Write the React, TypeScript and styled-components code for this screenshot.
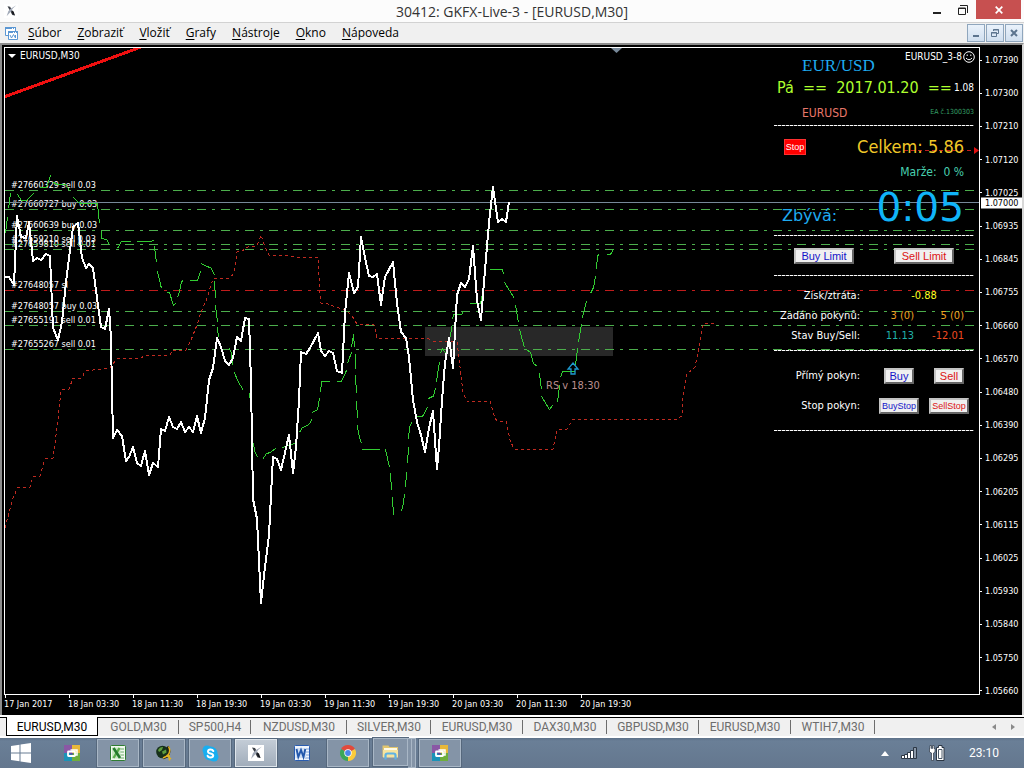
import React from "react";
import styled, { createGlobalStyle } from "styled-components";

const CHART_FONT = '"DejaVu Sans Condensed", "DejaVu Sans", sans-serif';
const WIDE_FONT = '"DejaVu Sans", sans-serif';
const UI_FONT = '"Open Sans", "Noto Sans", sans-serif';
const TAB_FONT = 'Roboto, "Noto Sans", sans-serif';

const GlobalStyle = createGlobalStyle`
  * { box-sizing: border-box; }
  body { margin: 0; background: #000; font-family: ${UI_FONT}; }
  button { font: inherit; padding: 0; cursor: pointer; }
  h1, h2, p, ul { margin: 0; padding: 0; font-weight: 400; list-style: none; }
`;

const Desktop = styled.div`
  display: flex;
  flex-direction: column;
  min-height: 100vh;
`;

/* ---------- title bar ---------- */

const TitleBar = styled.header`
  display: grid;
  grid-template-columns: 100px 1fr 100px;
  height: 23px;
  background: #fcfcfc;
  border-bottom: 1px solid #d2d2d2;
`;

const AppIcon = styled.div`
  padding: 4px 0 0 4px;
  svg { display: block; }
`;

const Title = styled.h1`
  font-size: 14px;
  line-height: 24px;
  text-align: center;
  color: #333;
  white-space: nowrap;
`;

const WindowButtons = styled.div`
  display: flex;
  justify-content: flex-end;
  padding-right: 3px;
`;

const WindowButton = styled.button<{ $close?: boolean }>`
  display: grid;
  place-items: center;
  width: ${(p) => (p.$close ? 45 : 26)}px;
  height: 19px;
  border: 0;
  background: ${(p) => (p.$close ? "#c75050" : "transparent")};
`;

/* ---------- menu ---------- */

const MenuBar = styled.nav`
  display: flex;
  align-items: center;
  height: 20px;
  padding-left: 4px;
  background: #f0f0f0;
`;

const MenuList = styled.ul`
  display: flex;
  flex: 1;
  gap: 16px;
  margin-left: 9px;
`;

const MenuItem = styled.button`
  display: block;
  border: 0;
  background: none;
  color: #000;
  font-family: ${UI_FONT};
  font-size: 12px;
  line-height: 18px;
  white-space: nowrap;
  u { text-underline-offset: 2px; }
`;

const MdiButtons = styled.div`
  display: flex;
  gap: 1px;
  padding-right: 1px;
`;

const MdiButton = styled.button`
  display: grid;
  place-items: center;
  width: 18px;
  height: 18px;
  border: 1px solid #8fa6bd;
  background: linear-gradient(#eaf2fb, #d0dfef);
`;

/* ---------- chart window ---------- */

const ChartFrame = styled.main`
  flex: 1;
  display: grid;
  grid-template-columns: 1fr 42px;
  grid-template-rows: 1fr 20px;
  padding: 2px 0 0 2px;
  min-height: 460px;
  background: #000;
  border: 2px solid #8c8c8c;
  border-right-color: #d8d8d8;
  border-bottom: 0;
  color: #fff;
  font-family: ${CHART_FONT};
`;

const Plot = styled.section`
  position: relative;
  border: 1px solid #fff;
  overflow: hidden;
`;

const ChartSvg = styled.svg`
  position: absolute;
  inset: 0;
  width: 100%;
  height: 100%;
`;

const VIEW = { x: 5, y: 48, w: 974, h: 646 };

const ChartLabel = styled.span<{ $x: number; $y: number; $size?: number; $color?: string }>`
  position: absolute;
  left: ${(p) => ((p.$x - VIEW.x) / VIEW.w) * 100}%;
  top: ${(p) => ((p.$y - VIEW.y) / VIEW.h) * 100}%;
  transform: translateY(-50%);
  font-size: ${(p) => p.$size ?? 9}px;
  line-height: 12px;
  color: ${(p) => p.$color ?? "#fff"};
  white-space: nowrap;
`;

const Zone = styled.div`
  position: absolute;
  left: ${((425 - VIEW.x) / VIEW.w) * 100}%;
  top: ${((327 - VIEW.y) / VIEW.h) * 100}%;
  width: ${(188 / VIEW.w) * 100}%;
  height: ${(29 / VIEW.h) * 100}%;
  background: #282828;
`;

const ChartTitle = styled.h2`
  position: absolute;
  top: 2px;
  left: 3px;
  display: flex;
  align-items: center;
  gap: 4px;
  font-size: 10px;
  line-height: 12px;
`;

const ExpertName = styled.div`
  position: absolute;
  top: 3px;
  right: 4px;
  display: flex;
  align-items: center;
  gap: 1px;
  font-size: 10px;
  line-height: 12px;
`;

const PriceAxis = styled.ul`
  position: relative;
  display: flex;
  flex-direction: column;
  justify-content: space-between;
  padding-top: 7px;
  margin-bottom: -2px;
`;

const PriceTick = styled.li`
  display: flex;
  align-items: center;
  gap: 3px;
  font-size: 9px;
  line-height: 12px;
  &::before { content: ""; width: 2px; height: 1px; background: #fff; }
`;

const CurrentPrice = styled.li`
  position: absolute;
  left: 1px;
  right: 0;
  top: 24%;
  transform: translateY(-50%);
  padding-left: 4px;
  background: #fff;
  color: #000;
  font-size: 9px;
  line-height: 11px;
`;

const TimeAxis = styled.ul`
  display: flex;
  overflow: hidden;
`;

const TimeTick = styled.li`
  flex: 0 0 64px;
  font-size: 9px;
  line-height: 12px;
  white-space: nowrap;
  &::before { content: ""; display: block; width: 1px; height: 3px; margin-left: 1px; background: #fff; }
`;

/* ---------- trading panel ---------- */

const Panel = styled.div`
  position: absolute;
  top: 8px;
  right: 5px;
  width: 200px;
  display: flex;
  flex-direction: column;
`;

const Divider = styled.hr`
  width: 100%;
  height: 1px;
  margin: 0;
  border: 0;
  background: repeating-linear-gradient(90deg, #fff 0 3px, #555 3px 4px);
`;

const PairName = styled.div`
  padding-left: 28px;
  color: #1eaaf0;
  font-family: "Liberation Serif", serif;
  font-size: 17px;
  line-height: 20px;
`;

const Spread = styled.div<{ $height: number; $indent: number }>`
  display: flex;
  align-items: center;
  justify-content: space-between;
  height: ${(p) => p.$height}px;
  padding-left: ${(p) => p.$indent}px;
`;

const PanelText = styled.span<{ $size: number; $color: string; $wide?: boolean }>`
  font-family: ${(p) => (p.$wide ? WIDE_FONT : CHART_FONT)};
  font-size: ${(p) => p.$size}px;
  line-height: 1;
  color: ${(p) => p.$color};
  white-space: pre;
`;

const TotalRow = styled.div`
  display: flex;
  align-items: center;
  justify-content: space-between;
  height: 34px;
  margin-top: 4px;
  padding: 0 10px;
`;

const StopButton = styled.button`
  width: 22px;
  height: 16px;
  border: 1px solid #ff3030;
  background: #f00;
  color: #fff;
  font-family: "Liberation Sans", sans-serif;
  font-size: 9px;
  line-height: 14px;
`;

const MarginRow = styled.div`
  padding-right: 10px;
  text-align: right;
  line-height: 14px;
  height: 14px;
`;

const CountdownRow = styled.div`
  display: flex;
  align-items: baseline;
  justify-content: space-between;
  height: 57px;
  padding: 10px 10px 0 8px;
`;

const LimitRow = styled.div`
  display: grid;
  grid-template-columns: 1fr 1fr;
  place-items: center;
  height: 39px;
`;

const TradeButton = styled.button<{ $side: "buy" | "sell"; $width: number; $small?: boolean }>`
  width: ${(p) => p.$width}px;
  height: 16px;
  border: 2px solid;
  border-color: #c4c4c4 #666 #666 #c4c4c4;
  background: #f0f0f0;
  color: ${(p) => (p.$side === "buy" ? "#1414c8" : "#dc1414")};
  font-family: "Liberation Sans", sans-serif;
  font-size: ${(p) => (p.$small ? 9 : 11)}px;
  line-height: 12px;
  white-space: nowrap;
`;

const Block = styled.div<{ $bottom: number }>`
  padding: 10px 0 ${(p) => p.$bottom}px;
`;

const Row = styled.div<{ $height: number }>`
  display: grid;
  grid-template-columns: 100px 50px 50px;
  align-items: center;
  height: ${(p) => p.$height}px;
  font-size: 11px;
  line-height: 14px;
  white-space: nowrap;
`;

const RowLabel = styled.span`
  padding-right: 14px;
  text-align: right;
`;

const Value = styled.span<{ $color: string; $span?: boolean }>`
  grid-column: ${(p) => (p.$span ? "2 / 4" : "auto")};
  padding-right: ${(p) => (p.$span ? 0 : 10)}px;
  text-align: ${(p) => (p.$span ? "center" : "right")};
  color: ${(p) => p.$color};
`;

const Cell = styled.span`
  display: grid;
  justify-items: center;
`;

/* ---------- chart tabs ---------- */

const TabBar = styled.nav`
  display: flex;
  height: 23px;
  padding-left: 6px;
  background: #f0f0f0;
  border-top: 2px solid #fff;
  border-bottom: 2px solid #fff;
  box-shadow: inset 0 1px 0 #000;
`;

const Tab = styled.button<{ $active?: boolean; $width: number }>`
  position: relative;
  width: ${(p) => p.$width}px;
  height: 19px;
  border: ${(p) => (p.$active ? "1px solid #000" : "0")};
  border-top: 0;
  background: ${(p) => (p.$active ? "#fff" : "none")};
  color: ${(p) => (p.$active ? "#000" : "#6d6d6d")};
  font-family: ${TAB_FONT};
  font-size: 12px;
  line-height: 20px;
  &::after {
    content: "";
    position: absolute;
    right: 0;
    top: 3px;
    width: ${(p) => (p.$active ? 0 : 1)}px;
    height: 14px;
    background: #6d6d6d;
  }
`;

const TabScroll = styled.div`
  display: flex;
  gap: 11px;
  margin-left: auto;
  padding-right: 7px;
`;

const ScrollButton = styled.button`
  display: grid;
  place-items: center;
  width: 8px;
  border: 0;
  background: none;
`;

/* ---------- taskbar ---------- */

const TaskBar = styled.footer`
  display: flex;
  align-items: center;
  height: 30px;
  background: linear-gradient(#5d7188, #6a7f97 3px, #64778e);
`;

const StartButton = styled.button`
  display: grid;
  place-items: center;
  width: 41px;
  margin-right: 10px;
  border: 0;
  background: none;
`;

const TaskButton = styled.button<{ $state: "idle" | "open" | "active" }>`
  display: grid;
  place-items: center;
  width: 42px;
  height: 28px;
  margin-right: 4px;
  border: 1px solid ${(p) => ({ idle: "transparent", open: "#a9b7c6", active: "#dfe6ec" })[p.$state]};
  background: ${(p) => ({ idle: "transparent", open: "#8494a7", active: "linear-gradient(#c3ccd6, #a1adbb)" })[p.$state]};
  box-shadow: 0 0 0 1px ${(p) => (p.$state === "idle" ? "transparent" : "#56687d")};
`;

const TaskStack = styled.div`
  display: flex;
  width: 46px;
  ${TaskButton} { width: 35px; margin-right: 0; }
  &::after {
    content: "";
    width: 7px;
    height: 28px;
    border: 1px solid #a9b7c6;
    border-left: 0;
    background: linear-gradient(90deg, #8494a7 3px, #a9b7c6 3px 4px, #8494a7 4px);
  }
`;

const Tray = styled.div`
  display: flex;
  align-items: center;
  margin-left: auto;
  padding-right: 25px;
`;

const TrayIcons = styled.div`
  display: flex;
  align-items: center;
  gap: 12px;
  margin-right: 24px;
`;

const Clock = styled.time`
  color: #fff;
  font-family: ${TAB_FONT};
  font-size: 12px;
`;

/* ---------- data ---------- */

const menus = ["Súbor", "Zobraziť", "Vložiť", "Grafy", "Nástroje", "Okno", "Nápoveda"];

const prices = [
  "1.07390", "1.07300", "1.07210", "1.07120", "1.07025", "1.06935", "1.06845", "1.06755", "1.06660", "1.06570",
  "1.06480", "1.06390", "1.06295", "1.06205", "1.06115", "1.06025", "1.05930", "1.05840", "1.05750", "1.05660",
];

const times = [
  "17 Jan 2017", "18 Jan 03:30", "18 Jan 11:30", "18 Jan 19:30", "19 Jan 03:30",
  "19 Jan 11:30", "19 Jan 19:30", "20 Jan 03:30", "20 Jan 11:30", "20 Jan 19:30",
];

const orders = [
  { line: 190, text: "#27660329 sell 0.03" },
  { line: 209, text: "#27660727 buy 0.03" },
  { line: 230, text: "#27660639 buy 0.03" },
  { line: 244, text: "#27659210 sell 0.03" },
  { line: 249, text: "#27659810 sell 0.01" },
  { line: 290, text: "#27648057 sl", stop: true },
  { line: 311, text: "#27648057 buy 0.03" },
  { line: 325, text: "#27655191 sell 0.01" },
  { line: 349, text: "#27655267 sell 0.01" },
];

const tabs = [
  { name: "EURUSD,M30", width: 92 },
  { name: "GOLD,M30", width: 81 },
  { name: "SP500,H4", width: 72 },
  { name: "NZDUSD,M30", width: 96 },
  { name: "SILVER,M30", width: 84 },
  { name: "EURUSD,M30", width: 92 },
  { name: "DAX30,M30", width: 84 },
  { name: "GBPUSD,M30", width: 92 },
  { name: "EURUSD,M30", width: 92 },
  { name: "WTIH7,M30", width: 84 },
];

const priceLine =
  "5,277 9,277 14,285 17,216 21,237 26,238 29,222 33,261 37,258 41,260 46,254 50,256 53,328 58,340 62,322 66,282 69,258 73,227 78,223 82,258 86,268 89,264 93,268 97,298 101,327 105,329 109,309 110,322 111,340 113,438 117,430 122,436 126,461 129,457 133,447 137,463 141,466 145,451 149,475 153,463 158,467 161,429 165,431 169,417 173,427 177,429 181,422 185,432 189,427 193,432 197,416 201,433 205,418 209,380 213,368 217,338 221,347 225,361 229,365 233,358 237,337 241,341 245,318 249,319 251,383 253,499 257,519 261,603 265,567 269,535 271,495 273,457 277,459 281,470 289,435 293,473 296,447 299,400 301,352 306,354 310,348 318,333 321,351 325,356 329,351 333,353 337,371 342,373 345,313 349,273 354,293 358,287 361,237 365,258 369,276 373,277 377,274 381,305 385,277 393,262 397,303 401,332 406,338 409,357 413,400 417,422 421,435 425,452 429,428 433,411 437,469 439,447 442,400 445,363 449,338 453,368 457,295 461,283 465,287 469,279 473,246 477,300 481,320 485,270 489,223 493,187 498,222 502,219 506,222 509,202";

const greenSegments = [
  "5,233 7,217", "8,208 10,193", "17,194 21,200 26,200 33,193", "39,187 46,187 50,175", "53,182 57,184 65,184 69,190",
  "73,197 78,202 82,203 97,203", "97,204 99,223", "101,230 101,238 106,239 109,244", "117,248 121,241 130,241",
  "136,241 151,241 154,239", "154,246 156,262", "157,271 161,288", "166,292 169,292 173,305 175,303",
  "177,297 179,291 181,281 183,280", "189,280 197,280 200,271", "201,263 206,266 210,267 213,272 214,275",
  "214,281 215,298", "215,305 217,322", "217,327 218,337", "229,348 231,353 232,365", "234,372 237,380 243,390",
  "249,393 250,401", "253,443 254,450 257,457", "262,459 266,453 270,452 276,447", "282,447 290,444 295,443",
  "299,432 302,427 309,424 311,419", "312,412 317,409 319,398", "320,392 321,381 329,381", "336,381 341,381 346,370",
  "347,363 351,352", "351,347 353,334 354,347", "355,353 355,368", "355,375 356,393", "356,401 357,418",
  "357,425 358,433 361,443", "361,449 379,449", "385,449 389,467", "390,473 391,490", "392,497 393,515",
  "400,511 402,508 404,494", "405,487 406,472", "407,463 408,447", "408,439 409,427 411,422", "414,416 422,416 427,407",
  "428,399 429,397 433,396 435,388", "436,382 437,373 439,362", "440,353 442,348 446,354", "447,348 449,343",
  "450,337 451,326", "452,319 453,314 461,314 463,311", "469,303 480,303 482,293", "483,290 484,281",
  "489,269 502,269 503,274", "504,282 514,298", "515,305 518,322", "519,329 524,347", "526,349 530,352 533,363 537,366",
  "539,373 541,389", "541,396 549,409 552,405", "557,402 559,385", "560,377 562,371 574,371", "575,365 577,348",
  "578,342 581,324", "582,318 583,312 586,301", "590,293 593,287 595,276", "596,269 597,255 599,254", "606,254 610,254 613,249",
];

const redCurve =
  "5,528 9,513 13,498 18,487 30,487 33,477 40,476 45,459 53,458 58,420 61,390 69,389 73,378 82,378 85,371 110,368 115,361 118,358 140,358 145,356 170,355 173,350 186,350 191,340 197,325 201,312 206,301 213,279 230,278 234,273 237,252 242,251 248,247 257,246 261,235 265,247 269,255 290,256 295,257 318,257 320,293 321,303 328,304 335,307 346,310 352,316 357,324 374,325 377,338 427,338 433,341 457,342 460,367 463,393 467,401 490,401 495,418 497,421 506,421 510,440 514,449 553,449 557,430 567,429 573,419 677,419 682,416 683,397 687,374 695,367 698,353 702,328 705,323 717,323";

/* ---------- icons ---------- */

const TerminalIcon = ({ size }: { size: number }) => (
  <svg width={size} height={size} viewBox="0 0 16 16" aria-hidden="true">
    <rect width="16" height="16" fill="#fff" />
    <path d="M4 2.500 7 3l5.500 10-3-.5z" fill="#3c4048" />
    <path d="M14 1.500 10 5 8.500 8 3 14l2-6 3-3z" fill="#a3abb9" />
    <path d="M9 7.500l2 1 1.500 4.500-3-2z" fill="#15171c" />
  </svg>
);

const ChartsIcon = () => (
  <svg width="15" height="15" viewBox="0 0 15 15" fill="#fff" stroke="#5b97d3" aria-hidden="true">
    <path d="M1.500 1.500h10v8h-10z" />
    <path d="M1 2h11" strokeWidth="2" strokeDasharray="7 1 1 1" />
    <path d="M4.500 5.500h9v8h-9z" />
    <path d="M4 6h10" strokeWidth="2" strokeDasharray="5 1 1 1" />
    <path d="M6 9l1.500 3 2-3.500 2 3.500V9" fill="none" />
  </svg>
);

const ColorSquareIcon = () => (
  <svg width="16" height="16" viewBox="0 0 16 16" aria-hidden="true">
    <path d="M0 0h8v8H0z" fill="#8a57a5" />
    <path d="M8 0h8v8H8z" fill="#e8b83a" />
    <path d="M0 8h8v8H0z" fill="#1b93b8" />
    <path d="M8 8h8v8H8z" fill="#6fae3c" />
    <rect x="4" y="6.500" width="7" height="4.500" rx=".5" fill="none" stroke="#fff" strokeWidth="1.800" />
    <path d="M6.500 5H13v5h-2" fill="none" stroke="#fff" strokeWidth="1.500" />
    <path d="M6 8h3v1.500H6z" fill="#5d4c9c" />
  </svg>
);

const ExcelIcon = () => (
  <svg width="16" height="16" viewBox="0 0 16 16" aria-hidden="true">
    <rect x=".5" y=".5" width="15" height="15" rx="1" fill="#f2f9ef" stroke="#2f7d32" />
    <path d="M10 4h4M10 7h4M10 10h4M10 13h4" stroke="#6aa86a" />
    <path d="M2 2.500h8.500v11H2z" fill="#c9e6c2" />
    <path d="M9.500 3l-6 10" stroke="#5cae4c" strokeWidth="2.400" />
    <path d="M3.500 3l6.500 10" stroke="#237a2b" strokeWidth="2.600" />
  </svg>
);

const GlobeIcon = () => (
  <svg width="16" height="16" viewBox="0 0 16 16" aria-hidden="true">
    <circle cx="6.500" cy="7" r="6.300" fill="#16301a" />
    <path d="M2 5q2-3.500 5-3l-1 3-3 2zM6 6.500l4-2 .5 3-3.500 2z" fill="#5d9c3e" />
    <path d="M11.500 1.500q3.500 5-.5 10l-4 1.500" fill="none" stroke="#1b1b12" strokeWidth="2.600" />
    <path d="M12.500 1.500q3 5.500-1.500 9.500l-4 2M10.500 10l4.500 4M13 10l.5 5.500" fill="none" stroke="#e2b321" strokeWidth="1.500" />
  </svg>
);

const SkypeIcon = () => (
  <svg width="17" height="17" viewBox="0 0 17 17" aria-hidden="true">
    <circle cx="8.500" cy="8.500" r="7" fill="#18aef0" />
    <circle cx="5" cy="5" r="4.500" fill="#18aef0" />
    <circle cx="12" cy="12" r="4.500" fill="#18aef0" />
    <path
      d="M11.300 6Q10.500 4.400 8.300 4.500T6 6.400Q6 8 8.500 8.400T11.200 10.600Q11 12.500 8.500 12.500T5.600 10.800"
      fill="none"
      stroke="#fff"
      strokeWidth="2"
      strokeLinecap="round"
    />
  </svg>
);

const WordIcon = () => (
  <svg width="16" height="16" viewBox="0 0 16 16" aria-hidden="true">
    <rect x=".5" y=".5" width="15" height="15" rx="1" fill="#f0f5fc" stroke="#2a5db0" />
    <path d="M11 4h4M11 7h4M11 10h4M11 13h4" stroke="#7fa3d9" />
    <path d="M1.500 3h10.500v10H1.500z" fill="#cfdff5" />
    <path d="M2.500 4l1.800 8L7 5l2.500 7 1.800-8" fill="none" stroke="#2358ac" strokeWidth="1.900" />
  </svg>
);

const ChromeIcon = () => (
  <svg width="16" height="16" viewBox="0 0 16 16" aria-hidden="true">
    <path d="M8 8 1.070 4A8 8 0 0 1 14.930 4z" fill="#e24a3b" />
    <path d="M8 8 14.930 4A8 8 0 0 1 8 16z" fill="#fbcb3c" />
    <path d="M8 8v8A8 8 0 0 1 1.070 4z" fill="#3aa757" />
    <circle cx="8" cy="8" r="3.700" fill="#fff" />
    <circle cx="8" cy="8" r="2.900" fill="#4a86e8" />
  </svg>
);

const FolderIcon = () => (
  <svg width="17" height="16" viewBox="0 0 17 16" aria-hidden="true">
    <path d="M.5 1.500h6l1 1.500h8.500v10H.5z" fill="#e2c66e" />
    <path d="M2 4h13v2H2z" fill="#fffbe6" />
    <path d="M1 6h15v7.500H1z" fill="#f5e4a0" />
    <path d="M3.500 15.500v-4q0-2 2-2h6q2 0 2 2v4" fill="none" stroke="#5eb3e4" strokeWidth="2.200" />
  </svg>
);

const WindowsIcon = () => (
  <svg width="20" height="20" viewBox="0 0 20 20" fill="#fff" aria-hidden="true">
    <path d="M0 3l8.500-1.200V9.500H0zM9.500 1.600 20 0v9.500H9.500zM0 10.500h8.500v7.700L0 17zM9.500 10.500H20V20L9.500 18.400z" />
  </svg>
);

const SignalIcon = () => (
  <svg width="16" height="12" viewBox="0 0 16 12" stroke="#2c3745" fill="#fff" aria-hidden="true">
    <path d="M.5 8.500h3v3h-3zM3.500 7.500h3v4h-3zM6.500 5.500h3v6h-3zM9.500 3.500h3v8h-3z" />
    <path d="M12.500.5h3v11h-3z" fill="#8b98a8" />
  </svg>
);

const BatteryIcon = () => (
  <svg width="16" height="16" viewBox="0 0 16 16" aria-hidden="true">
    <path d="M1 .5h1.500v3h1V.5H5v3h1v3.500L4.500 8v7.500h-2V8L.5 7V3.500H1z" fill="#fff" stroke="#2c3745" strokeWidth=".7" />
    <path d="M7.500 2.500h2v-2h3.500v2h2v13H7.500z" fill="#fff" stroke="#2c3745" />
    <path d="M9.500 4.500h3.500v9H9.500z" fill="#fff" stroke="#4a5868" />
  </svg>
);

const tasks: { label: string; state: "idle" | "open" | "active"; icon: React.ReactNode; stack?: boolean }[] = [
  { label: "Aplikácia", state: "idle", icon: <ColorSquareIcon /> },
  { label: "Excel", state: "open", icon: <ExcelIcon /> },
  { label: "Glóbus", state: "open", icon: <GlobeIcon /> },
  { label: "Skype", state: "open", icon: <SkypeIcon /> },
  { label: "Terminál", state: "active", icon: <TerminalIcon size={16} /> },
  { label: "Word", state: "idle", icon: <WordIcon /> },
  { label: "Chrome", state: "open", icon: <ChromeIcon /> },
  { label: "Prieskumník", state: "open", icon: <FolderIcon />, stack: true },
  { label: "Aplikácia 2", state: "open", icon: <ColorSquareIcon /> },
];

/* ---------- sections ---------- */

const ChartDrawing = () => (
  <ChartSvg viewBox={`${VIEW.x} ${VIEW.y} ${VIEW.w} ${VIEW.h}`} preserveAspectRatio="none" fill="none" aria-hidden="true">
    <g shapeRendering="crispEdges">
      {orders.map((o) => (
        <line
          key={o.line}
          x1="5"
          x2="974"
          y1={o.line + 0.5}
          y2={o.line + 0.5}
          stroke={o.stop ? "#c01c1c" : "#4cae4c"}
          strokeDasharray="9 6 3 6"
        />
      ))}
      <line x1="5" x2="979" y1="202.500" y2="202.500" stroke="#778899" />
      <polyline points={redCurve} stroke="#c02a20" strokeDasharray="3 3" />
      {greenSegments.map((s) => (
        <polyline key={s} points={s} stroke="#32cd32" transform="translate(.5 .5)" />
      ))}
      <line x1="4" y1="97" x2="141" y2="47" stroke="#f01010" strokeWidth="3" />
      <polyline points={priceLine} stroke="#fff" strokeWidth="2" strokeLinejoin="round" />
    </g>
    <path d="M573 363l5 6h-3v5h-4v-5h-3z" stroke="#1e9ad0" strokeWidth="1.300" />
    <path d="M611 48h11l-5.500 5z" fill="#778899" />
    <line x1="904" x2="975" y1="150.500" y2="150.500" stroke="#c01c1c" strokeDasharray="4 3" />
    <path d="M974 147l5 3.500-5 3.500z" fill="#e01010" />
  </ChartSvg>
);

const TradingPanel = () => (
  <Panel>
    <PairName>EUR/USD</PairName>
    <Spread $height={24} $indent={3}>
      <PanelText $size={16} $color="#adff2f">{"Pá  ==  2017.01.20  =="}</PanelText>
      <PanelText $size={10} $color="#fff">1.08</PanelText>
    </Spread>
    <Spread $height={25} $indent={28}>
      <PanelText $size={12} $color="#e9776a">EURUSD</PanelText>
      <PanelText $size={7} $color="#36a068">EA č.1300303</PanelText>
    </Spread>
    <Divider />
    <TotalRow>
      <StopButton>Stop</StopButton>
      <PanelText $size={18} $color="#f0c828">Celkem: 5.86</PanelText>
    </TotalRow>
    <MarginRow>
      <PanelText $size={12} $color="#48d1b0">{"Marže:  0 %"}</PanelText>
    </MarginRow>
    <CountdownRow>
      <PanelText $size={16} $color="#1eaaf0" $wide>Zbývá:</PanelText>
      <PanelText $size={39} $color="#10b4f8" $wide>0:05</PanelText>
    </CountdownRow>
    <Divider />
    <LimitRow>
      <TradeButton $side="buy" $width={60}>Buy Limit</TradeButton>
      <TradeButton $side="sell" $width={60}>Sell Limit</TradeButton>
    </LimitRow>
    <Divider />
    <Block $bottom={4}>
      <Row $height={20}>
        <RowLabel>Zisk/ztráta:</RowLabel>
        <Value $color="#ffff20" $span>-0.88</Value>
      </Row>
      <Row $height={20}>
        <RowLabel>Zadáno pokynů:</RowLabel>
        <Value $color="#f0a020">3 (0)</Value>
        <Value $color="#f0a020">5 (0)</Value>
      </Row>
      <Row $height={20}>
        <RowLabel>Stav Buy/Sell:</RowLabel>
        <Value $color="#20b2aa">11.13</Value>
        <Value $color="#f04a20">-12.01</Value>
      </Row>
    </Block>
    <Divider />
    <Block $bottom={9}>
      <Row $height={30}>
        <RowLabel>Přímý pokyn:</RowLabel>
        <Cell><TradeButton $side="buy" $width={30}>Buy</TradeButton></Cell>
        <Cell><TradeButton $side="sell" $width={30}>Sell</TradeButton></Cell>
      </Row>
      <Row $height={30}>
        <RowLabel>Stop pokyn:</RowLabel>
        <Cell><TradeButton $side="buy" $width={40} $small>BuyStop</TradeButton></Cell>
        <Cell><TradeButton $side="sell" $width={40} $small>SellStop</TradeButton></Cell>
      </Row>
    </Block>
    <Divider />
  </Panel>
);

export default function App() {
  return (
    <Desktop>
      <GlobalStyle />
      <TitleBar>
        <AppIcon><TerminalIcon size={14} /></AppIcon>
        <Title>30412: GKFX-Live-3 - [EURUSD,M30]</Title>
        <WindowButtons>
          <WindowButton aria-label="Minimalizovať">
            <svg width="10" height="10" viewBox="0 0 10 10"><path d="M1 7h8v2H1z" fill="#222" /></svg>
          </WindowButton>
          <WindowButton aria-label="Obnoviť">
            <svg width="10" height="10" viewBox="0 0 10 10" fill="none" stroke="#222"><path d="M.5 3h7v6.500h-7zM.5 3.500h7M2 .5h7.500V8" /></svg>
          </WindowButton>
          <WindowButton $close aria-label="Zavrieť">
            <svg width="8" height="8" viewBox="0 0 8 8"><path d="M.7.7l6.600 6.600M7.300.7.7 7.300" stroke="#fff" strokeWidth="1.700" /></svg>
          </WindowButton>
        </WindowButtons>
      </TitleBar>

      <MenuBar>
        <ChartsIcon />
        <MenuList>
          {menus.map((m) => (
            <li key={m}><MenuItem><u>{m[0]}</u>{m.slice(1)}</MenuItem></li>
          ))}
        </MenuList>
        <MdiButtons>
          <MdiButton aria-label="Minimalizovať graf">
            <svg width="10" height="10" viewBox="0 0 10 10"><path d="M2 7h6v2H2z" fill="#5c748e" /></svg>
          </MdiButton>
          <MdiButton aria-label="Obnoviť graf">
            <svg width="10" height="10" viewBox="0 0 10 10" fill="none" stroke="#5c748e"><path d="M1.500 4.500h5v4h-5zM1 5h6M3.500 3V1.500h5v4H7M3 2h6" /></svg>
          </MdiButton>
          <MdiButton aria-label="Zavrieť graf">
            <svg width="8" height="8" viewBox="0 0 8 8"><path d="M1 1l6 6M7 1 1 7" stroke="#5c748e" strokeWidth="2" /></svg>
          </MdiButton>
        </MdiButtons>
      </MenuBar>

      <ChartFrame>
        <Plot>
          <Zone />
          {orders.map((o) => (
            <ChartLabel key={o.line} $x={11} $y={o.line - 5}>{o.text}</ChartLabel>
          ))}
          <ChartLabel $x={546} $y={386} $size={11} $color="#bc8f8f">RS v 18:30</ChartLabel>
          <ChartDrawing />
          <ChartTitle>
            <svg width="8" height="4" viewBox="0 0 8 4" aria-hidden="true"><path d="M0 0h8L4 4z" fill="#fff" /></svg>
            EURUSD,M30
          </ChartTitle>
          <ExpertName>
            EURUSD_3-8
            <svg width="12" height="12" viewBox="0 0 12 12" fill="none" stroke="#fff" aria-hidden="true">
              <circle cx="6" cy="6" r="5.300" />
              <path d="M3 7q3 3.500 6 0M4.200 3.500v1.500M7.800 3.500v1.500" />
            </svg>
          </ExpertName>
          <TradingPanel />
        </Plot>
        <PriceAxis>
          {prices.map((p) => <PriceTick key={p}>{p}</PriceTick>)}
          <CurrentPrice>1.07000</CurrentPrice>
        </PriceAxis>
        <TimeAxis>
          {times.map((t) => <TimeTick key={t}>{t}</TimeTick>)}
        </TimeAxis>
      </ChartFrame>

      <TabBar>
        {tabs.map((t, i) => (
          <Tab key={i} $active={i === 0} $width={t.width}>{t.name}</Tab>
        ))}
        <TabScroll>
          <ScrollButton aria-label="Posunúť vľavo">
            <svg width="4" height="6" viewBox="0 0 4 6"><path d="M4 0v6L0 3z" fill="#8a8a8a" /></svg>
          </ScrollButton>
          <ScrollButton aria-label="Posunúť vpravo">
            <svg width="4" height="6" viewBox="0 0 4 6"><path d="M0 0v6l4-3z" fill="#8a8a8a" /></svg>
          </ScrollButton>
        </TabScroll>
      </TabBar>

      <TaskBar>
        <StartButton aria-label="Štart"><WindowsIcon /></StartButton>
        {tasks.map((t) =>
          t.stack ? (
            <TaskStack key={t.label}>
              <TaskButton $state={t.state} aria-label={t.label}>{t.icon}</TaskButton>
            </TaskStack>
          ) : (
            <TaskButton key={t.label} $state={t.state} aria-label={t.label}>{t.icon}</TaskButton>
          )
        )}
        <Tray>
          <TrayIcons>
            <svg width="8" height="5" viewBox="0 0 8 5" aria-hidden="true"><path d="M0 5l4-5 4 5z" fill="#fff" /></svg>
            <SignalIcon />
            <BatteryIcon />
          </TrayIcons>
          <Clock>23:10</Clock>
        </Tray>
      </TaskBar>
    </Desktop>
  );
}
